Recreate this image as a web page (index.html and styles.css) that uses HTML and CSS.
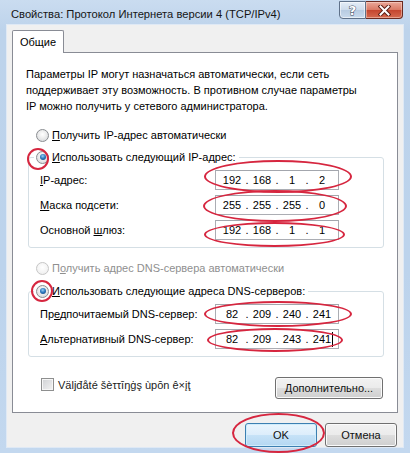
FILE: index.html
```html
<!DOCTYPE html>
<html lang="ru">
<head>
<meta charset="utf-8">
<title>TCP/IPv4</title>
<link rel="stylesheet" href="styles.css">
</head>
<body>
<div class="window">
  <div class="titlebar">
    <div class="title">Свойства: Протокол Интернета версии 4 (TCP/IPv4)</div>
    <div class="controls">
      <div class="ctl help"><span>?</span></div>
      <div class="ctl close">
        <svg width="13" height="11" viewBox="0 0 13 11"><path d="M2.5 1.5 L10.5 9.5 M10.5 1.5 L2.5 9.5" stroke="#5a1d14" stroke-width="4" stroke-linecap="square"/><path d="M2.5 1.5 L10.5 9.5 M10.5 1.5 L2.5 9.5" stroke="#fff" stroke-width="2" stroke-linecap="square"/></svg>
      </div>
    </div>
  </div>
  <div class="client">
    <div class="tab">Общие</div>
    <div class="panel">
      <p class="desc">Параметры IP могут назначаться автоматически, если сеть<br>поддерживает эту возможность. В противном случае параметры<br>IP можно получить у сетевого администратора.</p>
      <div class="opt first"><span class="radio"></span><span><u>П</u>олучить IP-адрес автоматически</span></div>
      <fieldset class="group g1">
        <legend class="opt"><span class="radio on"><i></i></span><span><u>И</u>спользовать следующий IP-адрес:</span></legend>
        <div class="row"><span><u>I</u>P-адрес:</span><div class="ip"><span>192</span><b>.</b><span>168</span><b>.</b><span>1</span><b>.</b><span>2</span></div></div>
        <div class="row"><span><u>М</u>аска подсети:</span><div class="ip"><span>255</span><b>.</b><span>255</span><b>.</b><span>255</span><b>.</b><span>0</span></div></div>
        <div class="row"><span>Основной <u>ш</u>люз:</span><div class="ip"><span>192</span><b>.</b><span>168</span><b>.</b><span>1</span><b>.</b><span>1</span></div></div>
      </fieldset>
      <div class="opt disabled"><span class="radio"></span><span>П<u>о</u>лучить адрес DNS-сервера автоматически</span></div>
      <fieldset class="group g2">
        <legend class="opt"><span class="radio on"><i></i></span><span><u>И</u>спользовать следующие адреса DNS-серверов:</span></legend>
        <div class="row"><span>Пр<u>е</u>дпочитаемый DNS-сервер:</span><div class="ip"><span>82</span><b>.</b><span>209</span><b>.</b><span>240</span><b>.</b><span>241</span></div></div>
        <div class="row"><span><u>А</u>льтернативный DNS-сервер:</span><div class="ip"><span>82</span><b>.</b><span>209</span><b>.</b><span>243</span><b>.</b><span class="caret">241</span></div></div>
      </fieldset>
      <div class="bottom">
        <div class="check"><span class="box"></span><span>Väljđåté šèττīŋġş ùpōn ê×įţ</span></div>
        <div class="btn adv"><span><u>Д</u>ополнительно...</span></div>
      </div>
    </div>
    <div class="actions">
      <div class="btn default">OK</div>
      <div class="btn">Отмена</div>
    </div>
  </div>
  <div class="mark m1"></div>
  <div class="mark m2"></div>
  <div class="mark m3"></div>
  <div class="mark m4"></div>
  <div class="mark m5"></div>
  <div class="mark m6"></div>
  <div class="mark m7"></div>
  <div class="mark m8"></div>
</div>
</body>
</html>
```

FILE: styles.css
```css
* { box-sizing: border-box; }
html, body { margin: 0; padding: 0; }
body {
  font-family: "Liberation Sans", Arial, sans-serif;
  font-size: 11px;
  color: #000;
  background: #bed4ec;
  white-space: nowrap;
}
u { text-decoration: underline; text-underline-offset: 1px; }

.window {
  position: relative;
  width: 410px;
  height: 453px;
  overflow: hidden;
  background: linear-gradient(#cadcf0, #bdd3eb 30px, #bcd3ec 60%, #c3d8ef);
}

.titlebar {
  height: 25px;
  display: flex;
  align-items: flex-start;
  padding-left: 11px;
}
.title {
  margin-top: 6px;
  font-size: 11.2px;
  line-height: 16px;
  color: #151515;
}
.controls {
  margin-left: auto;
  margin-right: 7px;
  margin-top: 1px;
  display: flex;
}
.ctl {
  height: 18px;
  display: flex;
  align-items: center;
  justify-content: center;
  border: 1px solid #5f7189;
}
.help {
  width: 27px;
  border-radius: 0 0 0 4px;
  background: linear-gradient(#e4edf7, #cddbeb 50%, #b7cbe1 51%, #c9daed);
  box-shadow: inset 0 0 0 1px rgba(255,255,255,.55);
}
.help span {
  font-family: "DejaVu Sans", sans-serif;
  font-weight: bold;
  font-size: 13px;
  line-height: 13px;
  color: #fff;
  -webkit-text-stroke: 1px #3f4d5e;
  paint-order: stroke fill;
}
.close {
  width: 37px;
  border-left: none;
  border-color: #6b2a20;
  border-radius: 0 0 4px 0;
  background: linear-gradient(#eaa899, #d97863 50%, #c4452e 51%, #d56a50);
  box-shadow: inset 0 0 0 1px rgba(255,230,220,.45);
}

.client {
  margin-left: 7px;
  width: 396px;
  height: 422px;
  background: #f0f0f0;
  padding: 5px 0 0 5px;
  box-shadow: 0 0 0 1px #dfe9f5;
}
.tab {
  position: relative;
  z-index: 1;
  width: 52px;
  height: 23px;
  margin-bottom: -1px;
  border: 1px solid #898c95;
  border-bottom: none;
  border-radius: 2px 2px 0 0;
  background: #fff;
  text-align: center;
  line-height: 22px;
}
.panel {
  width: 386px;
  height: 361px;
  border: 1px solid #898c95;
  background: #fff;
  padding: 13px 13px 0 13px;
}
.desc {
  margin: 0;
  line-height: 16px;
}

.opt {
  display: flex;
  align-items: center;
  gap: 3px;
  height: 16px;
}
.opt.first { margin-top: 13px; padding-left: 10px; }
.opt.disabled { margin-top: 12px; padding-left: 10px; color: #8f8f8f; }

.radio {
  width: 13px;
  height: 13px;
  border-radius: 50%;
  border: 1px solid #8a8d91;
  background: radial-gradient(circle at 50% 40%, #ffffff 0, #f1f1f1 35%, #d0d2d5 100%);
  display: flex;
  align-items: center;
  justify-content: center;
  flex: none;
}
.radio i {
  width: 6px;
  height: 6px;
  border-radius: 50%;
  background: radial-gradient(circle at 45% 35%, #9cd0f5 0, #2f7bc0 45%, #0d3f73 100%);
}
.opt.disabled .radio {
  border-color: #c6c6c6;
  background: radial-gradient(circle at 50% 40%, #ffffff, #ececec);
}

.group {
  margin: 0 0 0 2px;
  width: 356px;
  border: 1px solid #d5dfe5;
  border-radius: 3px;
  padding: 5px 0 7px 0;
  min-width: 0;
}
.group.g1 { margin-top: 6px; }
.group.g2 { margin-top: 7px; }
.group legend {
  margin-left: 5px;
  padding: 0 3px 0 2px;
  line-height: 16px;
}
.row {
  display: grid;
  grid-template-columns: 175px 124px;
  align-items: center;
  height: 20px;
  padding-left: 11px;
}
.row + .row { margin-top: 5px; }
.ip {
  height: 20px;
  border: 1px solid #abadb3;
  border-top-color: #a3a6ad;
  display: flex;
  align-items: center;
  padding-left: 4px;
}
.ip span { width: 24px; text-align: center; }
.ip b { width: 6px; font-weight: normal; text-align: center; }
.ip .caret { position: relative; }
.ip .caret::after {
  content: "";
  position: absolute;
  right: 1px;
  top: -1px;
  width: 1px;
  height: 15px;
  background: #000;
}

.bottom {
  display: flex;
  align-items: flex-start;
  margin-top: 20px;
  padding-left: 15px;
}
.check {
  display: flex;
  align-items: center;
  gap: 4px;
  margin-top: 1px;
  height: 13px;
  color: #222;
}
.box {
  width: 13px;
  height: 13px;
  border: 1px solid #8e8f8f;
  background: linear-gradient(135deg, #cfd1d4, #f3f3f3);
  box-shadow: inset 0 0 0 1px #f6f6f6;
}
.btn {
  height: 24px;
  width: 72px;
  border: 1px solid #707070;
  border-radius: 3px;
  background: linear-gradient(#f2f2f2, #ebebeb 50%, #dddddd 51%, #cfcfcf);
  box-shadow: inset 0 0 0 1px #fbfbfb;
  display: flex;
  align-items: center;
  justify-content: center;
  color: #111;
}
.btn.adv {
  margin-left: auto;
  margin-right: 1px;
  width: 108px;
  height: 22px;
}
.btn.default {
  border-color: #3c7fb1;
  background: linear-gradient(#eaf5fd, #dcedfb 50%, #c6e2f7 51%, #b4d7f2);
  box-shadow: inset 0 0 0 1px #d0ecfb;
}
.actions {
  display: flex;
  justify-content: flex-end;
  gap: 8px;
  margin-top: 10px;
  padding-right: 6px;
}

.mark {
  position: absolute;
  border: 2px solid #d6263f;
  border-radius: 50%;
}
.m1 { left: 204px; top: 160px; width: 148px; height: 33px; }
.m2 { left: 203px; top: 190px; width: 144px; height: 32px; }
.m3 { left: 204px; top: 222px; width: 141px; height: 25px; }
.m4 { left: 204px; top: 301px; width: 148px; height: 26px; }
.m5 { left: 207px; top: 328px; width: 136px; height: 24px; }
.m6 { left: 232px; top: 413px; width: 93px; height: 40px; }
.m7 { left: 27px; top: 148px; width: 22px; height: 22px; }
.m8 { left: 31px; top: 280px; width: 22px; height: 22px; }
```
